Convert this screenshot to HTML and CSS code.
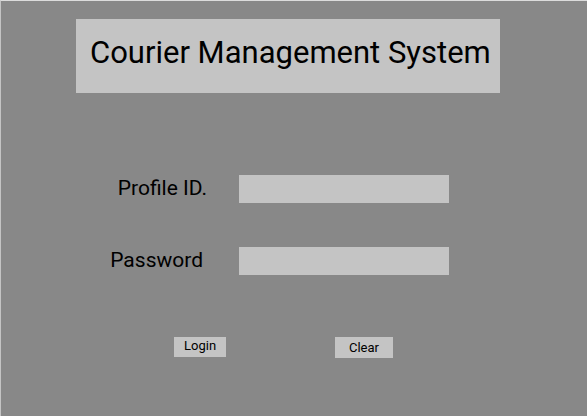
FILE: index.html
```html
<!DOCTYPE html>
<html lang="en">
<head>
<meta charset="utf-8">
<title>Courier Management System</title>
<link rel="stylesheet" href="styles.css">
</head>
<body>
<main class="page">
  <header class="banner"><h1>Courier Management System</h1></header>
  <form class="login">
    <div class="field">
      <label for="profile">Profile ID.</label>
      <input id="profile" type="text">
    </div>
    <div class="field">
      <label class="short" for="password">Password</label>
      <input id="password" type="password">
    </div>
    <div class="actions">
      <button class="submit" type="submit">Login</button>
      <button class="reset" type="reset">Clear</button>
    </div>
  </form>
</main>
</body>
</html>
```
FILE: styles.css
```css
* {
  box-sizing: border-box;
}

body {
  margin: 0;
  font-family: Roboto, "Liberation Sans", sans-serif;
  color: #000;
  background: #888;
}

.page {
  min-height: 100vh;
  padding: 18px 87px 0 75px;
  border-top: 1px solid #dcdcdc;
  border-left: 1px solid #c4c4c4;
}

.banner {
  padding: 14px 10px 20px 14px;
  text-align: center;
  background: #c4c4c4;
}

h1 {
  margin: 0;
  font-size: 31px;
  line-height: 40px;
  font-weight: 400;
  white-space: nowrap;
}

.login {
  display: grid;
  gap: 44px;
  padding-top: 82px;
}

.field {
  display: grid;
  grid-template-columns: 163px 1fr;
  padding-right: 51px;
}

.field label {
  justify-self: end;
  padding-right: 32px;
  font-size: 21px;
  line-height: 26px;
}

.field .short {
  padding-right: 36px;
}

.field input {
  width: 100%;
  height: 28px;
  padding: 0 8px;
  border: 0;
  font: inherit;
  background: #c4c4c4;
}

.actions {
  display: flex;
  justify-content: space-between;
  align-items: flex-start;
  padding: 18px 107px 0 98px;
}

.actions button {
  border: 0;
  font: inherit;
  font-size: 13px;
  line-height: 17px;
  color: inherit;
  background: #c4c4c4;
}

.actions .submit {
  padding: 0 10px 3px;
}

.actions .reset {
  padding: 2px 14px;
}
```
